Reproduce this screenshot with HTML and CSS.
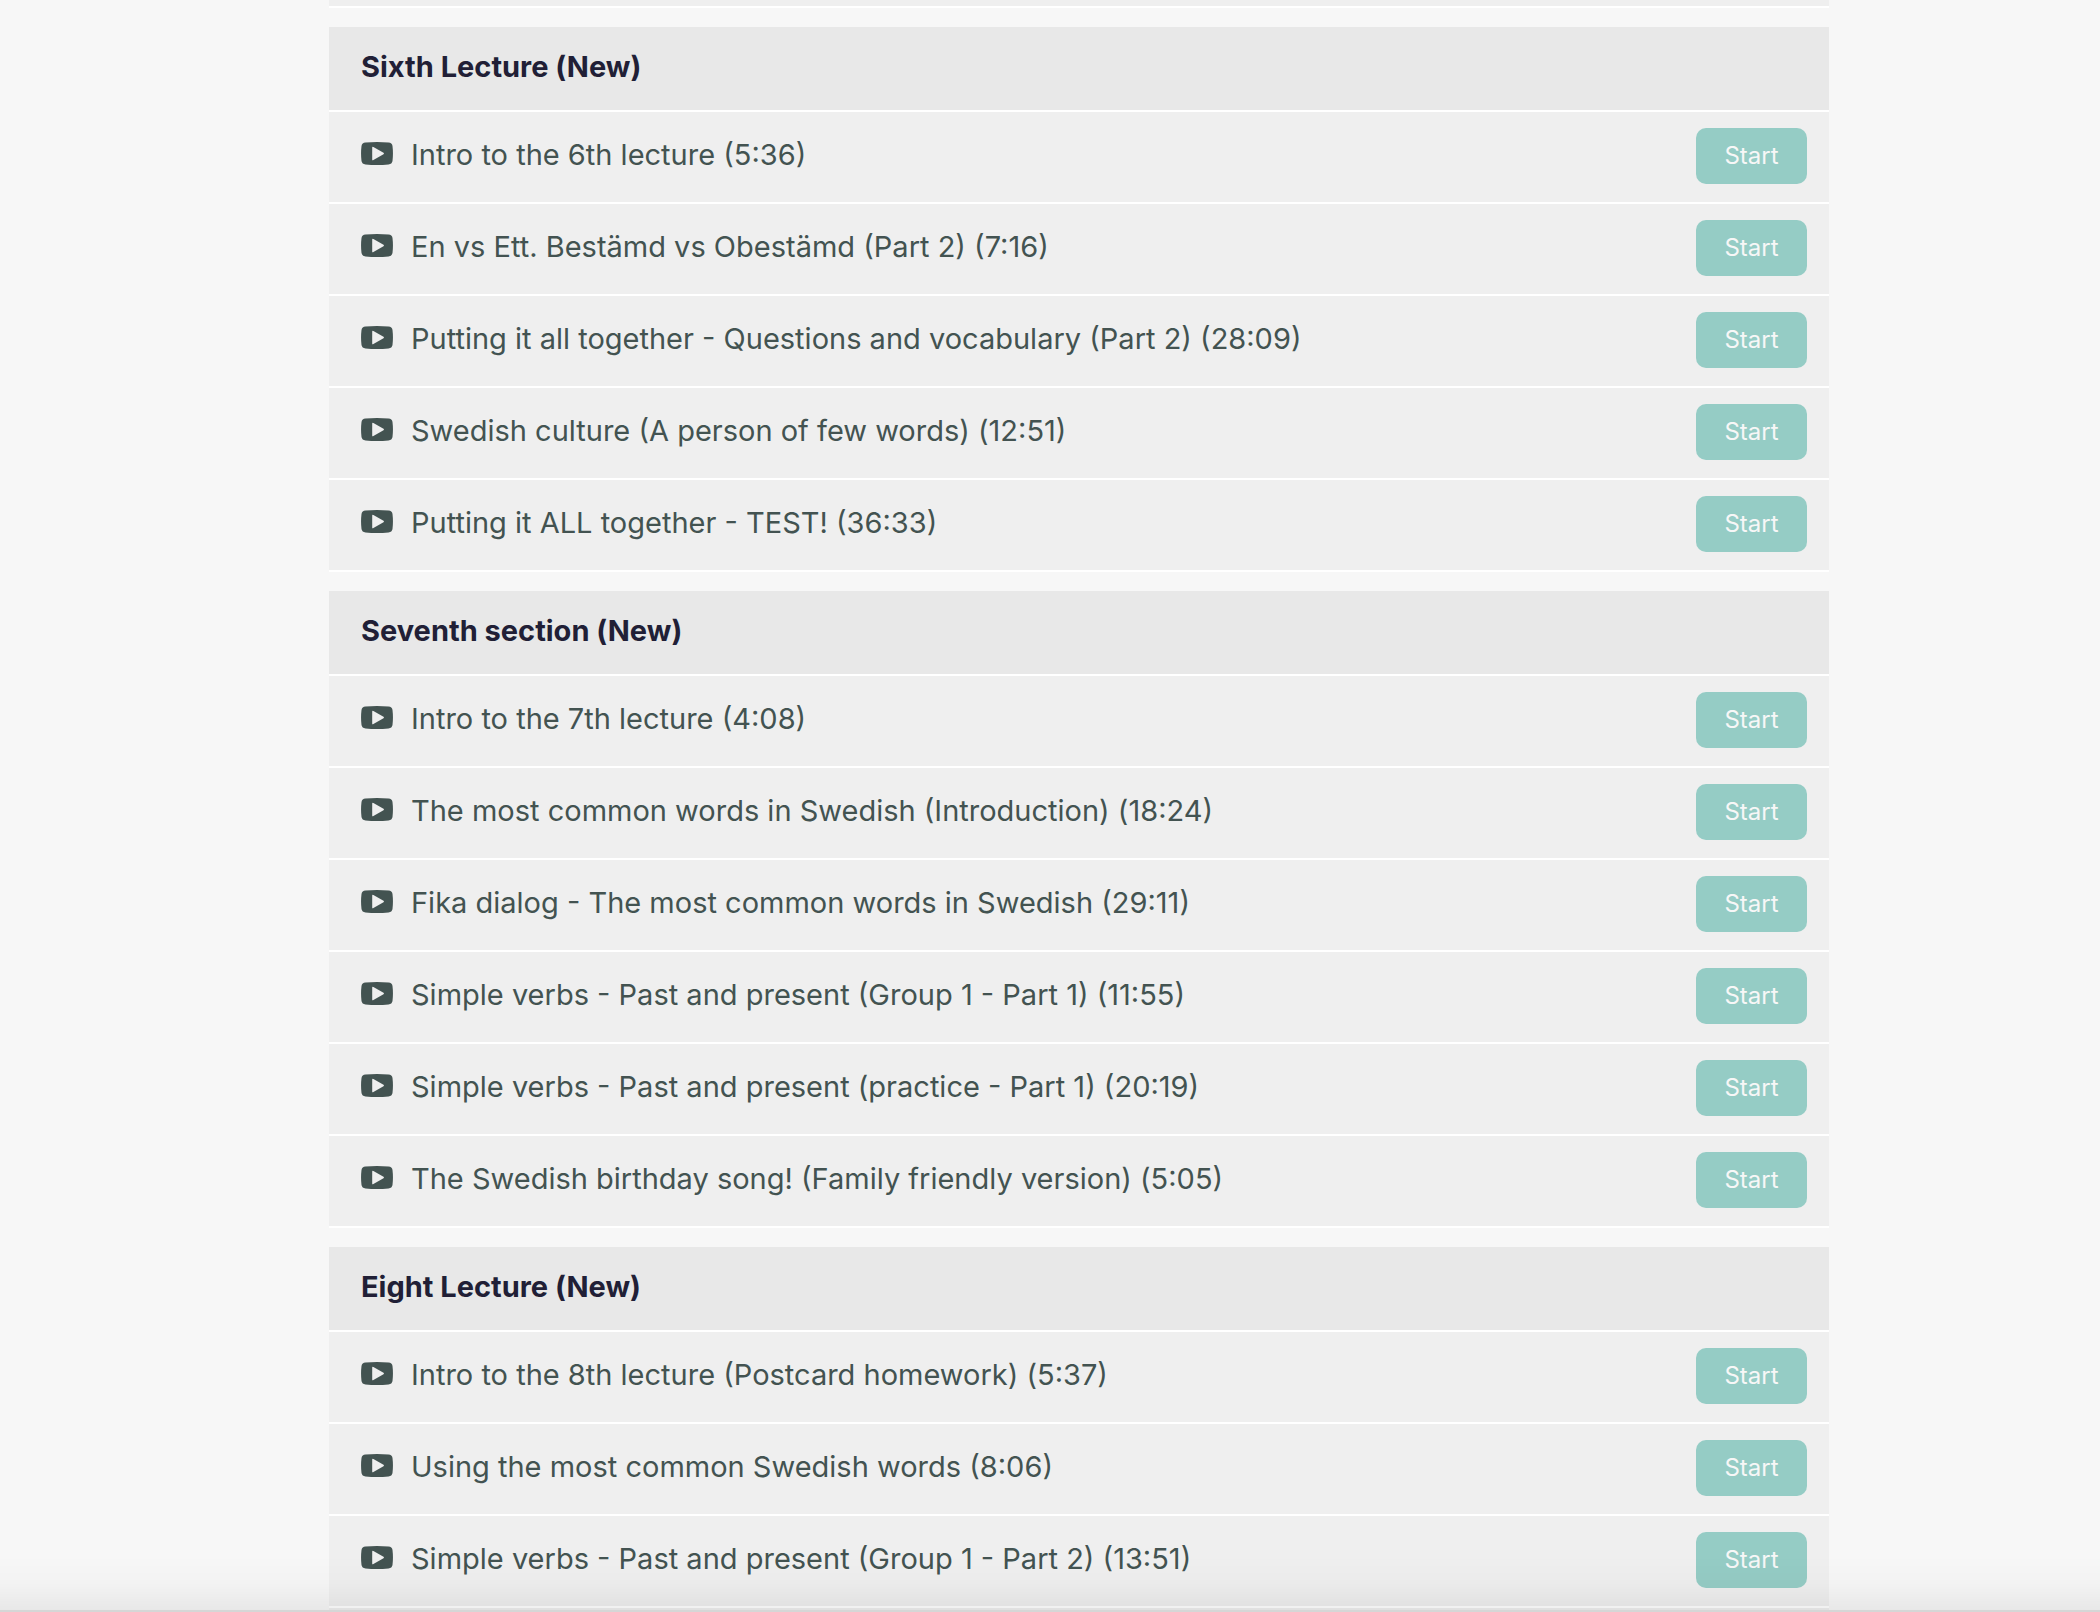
FILE: index.html
```html
<!DOCTYPE html>
<html lang="en">
<head>
<meta charset="utf-8">
<meta name="viewport" content="width=device-width, initial-scale=1">
<title>Course curriculum</title>
<link rel="stylesheet" href="styles.css">
</head>
<body>
<svg class="sprite" aria-hidden="true">
  <symbol id="video" viewBox="0 0 32 23">
    <path fill-rule="evenodd" d="M4.500 .6Q16-.6 27.500 .6Q31 .9 31.500 4Q32.400 11.500 31.500 19Q31 22.100 27.500 22.400Q16 23.600 4.500 22.400Q1 22.100 .5 19Q-.4 11.500 .5 4Q1 .9 4.500 .6ZM11.200 5.600V17.400Q11.200 18.700 12.400 18.100L22.500 12.200Q23.400 11.500 22.500 10.800L12.400 4.900Q11.200 4.300 11.200 5.600Z"/>
  </symbol>
</svg>
<main class="curriculum">
  <div class="edge edge-top"></div>

  <section class="section">
    <h2 class="section-title">Sixth Lecture (New)</h2>
    <ul class="lectures">
      <li class="lecture"><svg class="icon" aria-hidden="true"><use href="#video"/></svg><a class="name" href="#">Intro to the 6th lecture (5:36)</a><button class="start" type="button">Start</button></li>
      <li class="lecture"><svg class="icon" aria-hidden="true"><use href="#video"/></svg><a class="name" href="#">En vs Ett. Bestämd vs Obestämd (Part 2) (7:16)</a><button class="start" type="button">Start</button></li>
      <li class="lecture"><svg class="icon" aria-hidden="true"><use href="#video"/></svg><a class="name" href="#">Putting it all together - Questions and vocabulary (Part 2) (28:09)</a><button class="start" type="button">Start</button></li>
      <li class="lecture"><svg class="icon" aria-hidden="true"><use href="#video"/></svg><a class="name" href="#">Swedish culture (A person of few words) (12:51)</a><button class="start" type="button">Start</button></li>
      <li class="lecture"><svg class="icon" aria-hidden="true"><use href="#video"/></svg><a class="name" href="#">Putting it ALL together - TEST! (36:33)</a><button class="start" type="button">Start</button></li>
    </ul>
  </section>

  <section class="section">
    <h2 class="section-title">Seventh section (New)</h2>
    <ul class="lectures">
      <li class="lecture"><svg class="icon" aria-hidden="true"><use href="#video"/></svg><a class="name" href="#">Intro to the 7th lecture (4:08)</a><button class="start" type="button">Start</button></li>
      <li class="lecture"><svg class="icon" aria-hidden="true"><use href="#video"/></svg><a class="name" href="#">The most common words in Swedish (Introduction) (18:24)</a><button class="start" type="button">Start</button></li>
      <li class="lecture"><svg class="icon" aria-hidden="true"><use href="#video"/></svg><a class="name" href="#">Fika dialog - The most common words in Swedish (29:11)</a><button class="start" type="button">Start</button></li>
      <li class="lecture"><svg class="icon" aria-hidden="true"><use href="#video"/></svg><a class="name" href="#">Simple verbs - Past and present (Group 1 - Part 1) (11:55)</a><button class="start" type="button">Start</button></li>
      <li class="lecture"><svg class="icon" aria-hidden="true"><use href="#video"/></svg><a class="name" href="#">Simple verbs - Past and present (practice - Part 1) (20:19)</a><button class="start" type="button">Start</button></li>
      <li class="lecture"><svg class="icon" aria-hidden="true"><use href="#video"/></svg><a class="name" href="#">The Swedish birthday song! (Family friendly version) (5:05)</a><button class="start" type="button">Start</button></li>
    </ul>
  </section>

  <section class="section">
    <h2 class="section-title">Eight Lecture (New)</h2>
    <ul class="lectures">
      <li class="lecture"><svg class="icon" aria-hidden="true"><use href="#video"/></svg><a class="name" href="#">Intro to the 8th lecture (Postcard homework) (5:37)</a><button class="start" type="button">Start</button></li>
      <li class="lecture"><svg class="icon" aria-hidden="true"><use href="#video"/></svg><a class="name" href="#">Using the most common Swedish words (8:06)</a><button class="start" type="button">Start</button></li>
      <li class="lecture"><svg class="icon" aria-hidden="true"><use href="#video"/></svg><a class="name" href="#">Simple verbs - Past and present (Group 1 - Part 2) (13:51)</a><button class="start" type="button">Start</button></li>
    </ul>
    <div class="edge"></div>
  </section>
</main>
<div class="bottom-shade"></div>
</body>
</html>
```

FILE: styles.css
```css
* {
  box-sizing: border-box;
}

body {
  margin: 0;
  background: #f7f7f7;
  color: #435351;
  font-family: Metropolis, Inter, sans-serif;
  font-size: 29px;
}

.sprite {
  display: none;
}

.curriculum {
  padding: 0 271px 0 329px;
}

/* Slivers of the rows before and after the visible list */
.edge {
  height: 4px;
  background: #efefef;
}

.edge-top {
  height: 8px;
  border-bottom: 2px solid #fff;
}

.section {
  margin-top: 19px;
}

.section-title {
  margin: 0;
  padding: 20px 32px 23px;
  border-bottom: 2px solid #fff;
  background: #e8e8e8;
  color: #211f36;
  font-size: 29px;
  font-weight: 700;
  line-height: 40px;
}

.lectures {
  margin: 0;
  padding: 0;
  list-style: none;
}

.lecture {
  display: flex;
  align-items: center;
  padding: 16px 22px 18px 32px;
  border-bottom: 2px solid #fff;
  background: #efefef;
}

.icon {
  flex: none;
  width: 32px;
  height: 23px;
  margin-bottom: 6px;
  fill: #435351;
}

.name {
  flex: 1;
  margin: 0 20px 2px 18px;
  color: inherit;
  line-height: 40px;
  text-decoration: none;
}

.start {
  flex: none;
  width: 111px;
  height: 56px;
  padding: 0 0 2px;
  border: 0;
  border-radius: 10px;
  background: #95ccc5;
  color: #f7f7f7;
  font: inherit;
  font-size: 24px;
  cursor: pointer;
}

.bottom-shade {
  position: fixed;
  inset: auto 0 0;
  height: 56px;
  border-bottom: 2px solid #d6d6d6;
  background: linear-gradient(rgba(0, 0, 0, 0), rgba(0, 0, 0, 0.015) 50%, rgba(0, 0, 0, 0.06));
  pointer-events: none;
}
```
